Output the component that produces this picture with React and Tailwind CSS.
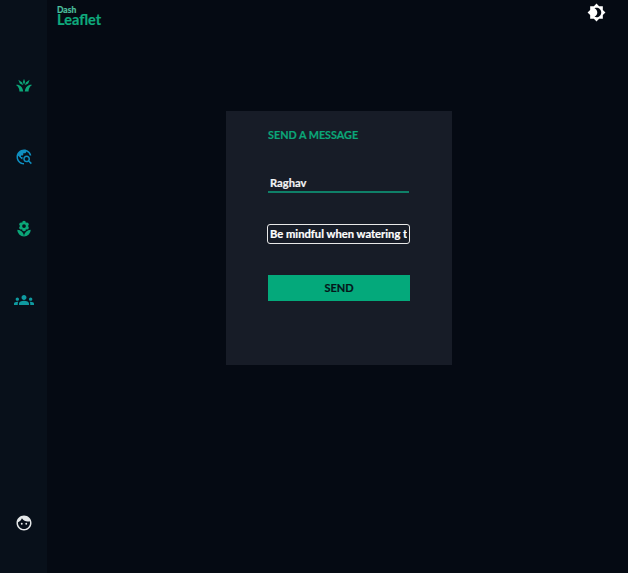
import { MdTravelExplore, MdLocalFlorist, MdGroups, MdBrightness4, MdFace } from 'react-icons/md';

function SproutIcon({ className }) {
  return (
    <svg viewBox="0 0 15 13" fill="currentColor" className={className}>
      <path d="M7.5 0.6 8.5 3.8 7.5 6.2 6.5 3.8Z" />
      <path d="M2.2 1.6 5.8 4.2 6.6 6.8 3.6 5.2Z" />
      <path d="M12.8 1.6 9.2 4.2 8.4 6.8 11.4 5.2Z" />
      <path d="M0 6.4C3.4 6 6 8 6.8 12.6H3.2C3.4 10.2 2.2 7.8 0 6.4Z" />
      <path d="M15 6.4C11.6 6 9 8 8.2 12.6H11.8C11.6 10.2 12.8 7.8 15 6.4Z" />
    </svg>
  );
}

const NAV_ITEMS = [
  { Icon: SproutIcon, color: 'text-[#0ba678]', size: 'w-[16px] h-[14px] my-[2px]' },
  { Icon: MdTravelExplore, color: 'text-[#0f8fc0]', size: 'text-[18px]' },
  { Icon: MdLocalFlorist, color: 'text-[#0ba678]', size: 'text-[18px]' },
  { Icon: MdGroups, color: 'text-[#0f9aa0]', size: 'text-[20px] -mt-[2px]' },
];

export default function App() {
  return (
    <div className="flex h-[573px] w-[628px] overflow-hidden bg-[#050a13] font-['Lato',sans-serif]">
      <aside className="flex w-[47px] shrink-0 flex-col items-center bg-[#08101a] pt-[76px] pb-[41px]">
        <div className="flex flex-col items-center gap-[54px]">
          {NAV_ITEMS.map(({ Icon, color, size }, i) => (
            <Icon key={i} className={`${color} ${size}`} />
          ))}
        </div>
        <MdFace className="mt-auto text-[18px] text-[#e4e7e8]" />
      </aside>

      <div className="flex min-w-0 flex-1 flex-col">
        <header className="flex h-[111px] items-start justify-between pr-[22px] pl-[10px]">
          <div className="mt-[5px] flex flex-col font-bold text-[#0fa97c] [-webkit-text-stroke:0.2px_currentColor]">
            <span className="text-[8.5px] leading-[10px] text-[#4fc3a1]">Dash</span>
            <span className="text-[14.5px] leading-[9px]">Leaflet</span>
          </div>
          <MdBrightness4 className="mt-[3px] text-[19px] text-white" />
        </header>

        <main className="ml-[179px] flex h-[254px] w-[226px] flex-col bg-[#171c27] pt-[16px] pl-[42px]">
          <h2 className="text-[10.8px] leading-[15px] font-bold text-[#0ba678] [-webkit-text-stroke:0.2px_currentColor]">SEND A MESSAGE</h2>
          <input
            readOnly
            value="Raghav"
            className="mt-[32px] h-[19px] w-[141px] border-b-2 border-[#0f8068] bg-transparent px-[2px] pb-[1px] text-[11.2px] font-bold text-[#f2f3f5] outline-none [-webkit-text-stroke:0.2px_currentColor]"
          />
          <input
            readOnly
            value="Be mindful when watering the plants"
            className="mt-[31px] h-[20px] w-[143px] -translate-x-[1px] rounded-[3px] border border-[#e8e8e8] bg-transparent px-[2px] pb-[1px] text-[11.2px] font-bold text-white outline-none [-webkit-text-stroke:0.2px_currentColor]"
          />
          <button className="mt-[31px] h-[26px] w-[142px] bg-[#04a97b] text-[11px] font-bold text-[#05161a] [-webkit-text-stroke:0.2px_currentColor]">
            SEND
          </button>
        </main>
      </div>
    </div>
  );
}
